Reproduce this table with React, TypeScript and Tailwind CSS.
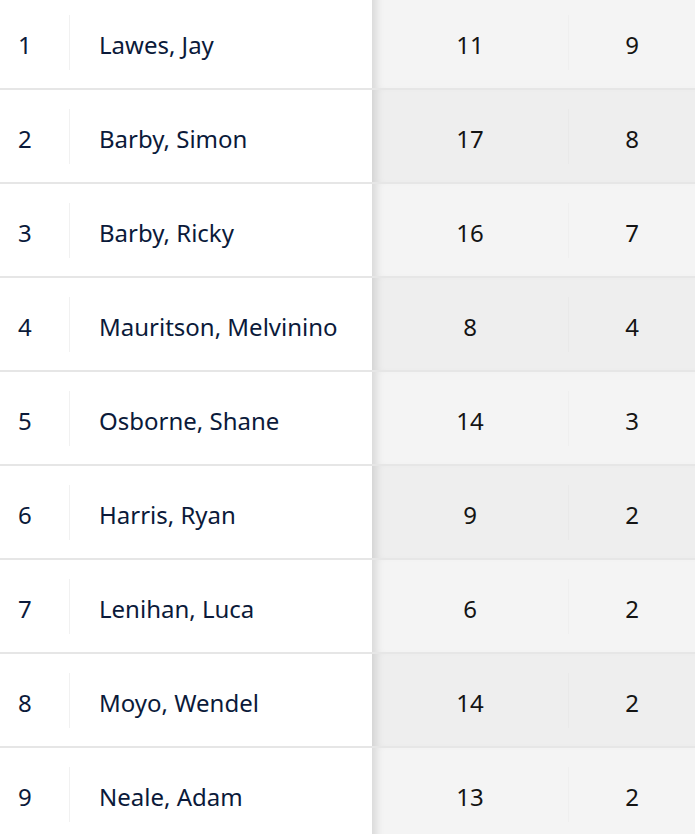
import React from 'react';

interface Row {
  pos: number;
  name: string;
  played: number;
  goals: number;
}

const rows: Row[] = [
  { pos: 1, name: 'Lawes, Jay', played: 11, goals: 9 },
  { pos: 2, name: 'Barby, Simon', played: 17, goals: 8 },
  { pos: 3, name: 'Barby, Ricky', played: 16, goals: 7 },
  { pos: 4, name: 'Mauritson, Melvinino', played: 8, goals: 4 },
  { pos: 5, name: 'Osborne, Shane', played: 14, goals: 3 },
  { pos: 6, name: 'Harris, Ryan', played: 9, goals: 2 },
  { pos: 7, name: 'Lenihan, Luca', played: 6, goals: 2 },
  { pos: 8, name: 'Moyo, Wendel', played: 14, goals: 2 },
  { pos: 9, name: 'Neale, Adam', played: 13, goals: 2 },
];

export default function App() {
  return (
    <div className="w-[695px] h-[834px] overflow-hidden bg-white font-['Noto_Sans',sans-serif]">
      {/* first row is scrolled a few px off the top */}
      <div className="-mt-[4px]">
        {rows.map((r, i) => {
          const even = i % 2 === 1;
          return (
            <div key={r.pos} className="flex h-[94px] border-b-2 border-[#e6e6e6]">
              {/* player */}
              <div className="flex w-[372px] items-center bg-white">
                <div className="w-[69px] pl-[18px] pt-[6px] text-[24px] text-[#0b1a3a]">{r.pos}</div>
                <div className="h-[55px] w-px bg-[#f1f1f1]" />
                <div className="pl-[29px] pt-[6px] text-[24px] text-[#0b1a3a] whitespace-nowrap">{r.name}</div>
              </div>
              {/* stats */}
              <div
                className={`flex flex-1 items-center ${even ? 'bg-[#eeeeee]' : 'bg-[#f4f4f4]'} shadow-[inset_10px_0_8px_-6px_rgba(0,0,0,0.12)]`}
              >
                <div className="w-[196px] pt-[6px] text-center text-[24px] text-[#141414]">{r.played}</div>
                <div className={`h-[55px] w-px ${even ? 'bg-[#e9e9e9]' : 'bg-[#efefef]'}`} />
                <div className="flex-1 pt-[6px] text-center text-[24px] text-[#141414]">{r.goals}</div>
              </div>
            </div>
          );
        })}
      </div>
    </div>
  );
}
